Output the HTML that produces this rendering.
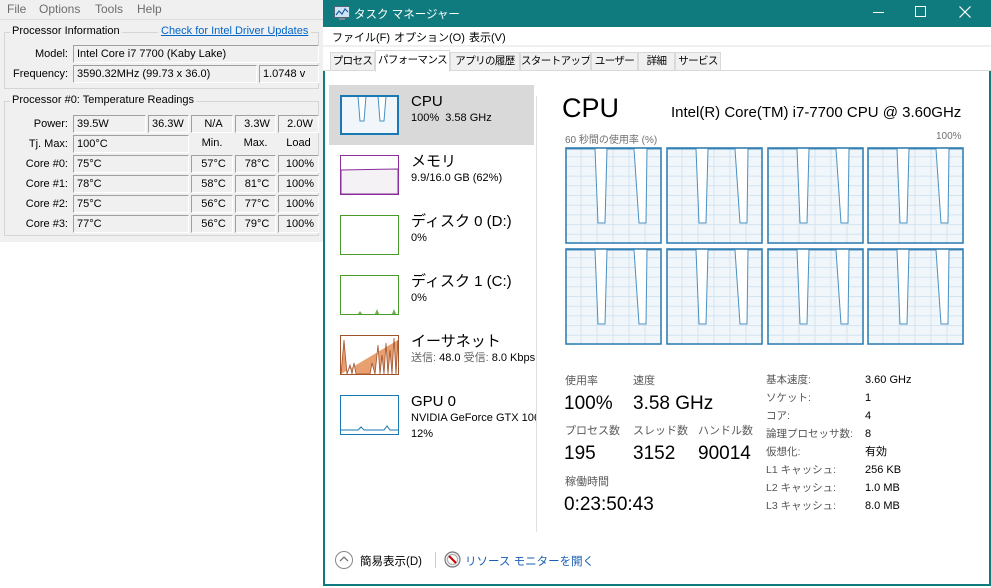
<!DOCTYPE html>
<html><head><meta charset="utf-8"><style>
*{margin:0;padding:0;box-sizing:border-box}
body{width:991px;height:588px;background:#fff;position:relative;overflow:hidden;font-family:"Liberation Sans","Noto Sans CJK JP",sans-serif;font-size:12px;color:#000}
.a{position:absolute;white-space:nowrap}
#left{left:0;top:0;width:323px;height:242px;background:#f0f0f0;font-size:11px}
.box{position:absolute;background:#f0f0f0;border:1px solid #a0a0a0;border-right-color:#fff;border-bottom-color:#fff;height:18px;line-height:16px;padding-left:3px}
.lbl{position:absolute;text-align:right;width:68px;line-height:18px}
.grp{position:absolute;border:1px solid #d5d5d5}
#tm{left:323px;top:0;width:668px;height:586px;border:2px solid #0f7b7f;border-top:none;background:#fff}
.tab{position:absolute;top:52px;height:19px;border:1px solid #d9d9d9;background:#f0f0f0;line-height:17px;padding:0;font-size:10.5px;letter-spacing:-0.6px;text-align:center;overflow:hidden}
.it1{position:absolute;font-size:15px;line-height:18px}
.it2{position:absolute;font-size:11px;line-height:14px}
.sl{position:absolute;font-size:11px;color:#595959;line-height:14px}
.sv{position:absolute;font-size:19px;line-height:22px}
.rl{position:absolute;font-size:10.5px;color:#555;line-height:14px}
.rv{position:absolute;font-size:11px;line-height:14px}
.mn{position:absolute;top:31px;font-size:11px;line-height:14px}
</style></head><body>
<div id="left" class="a">
 <div class="a" style="left:7px;top:2px;color:#6d6d6d;font-size:12px">File</div>
 <div class="a" style="left:39px;top:2px;color:#6d6d6d;font-size:12px">Options</div>
 <div class="a" style="left:95px;top:2px;color:#6d6d6d;font-size:12px">Tools</div>
 <div class="a" style="left:137px;top:2px;color:#6d6d6d;font-size:12px">Help</div>
 <div class="a" style="left:0;top:19px;width:323px;height:1px;background:#ddd"></div>
 <div class="grp" style="left:4px;top:32px;width:315px;height:57px"></div>
 <div class="a" style="left:10px;top:25px;background:#f0f0f0;padding:0 2px">Processor Information</div>
 <div class="a" style="left:158px;top:25px;background:#f0f0f0;padding:0 3px;color:#0066cc;text-decoration:underline">Check for Intel Driver Updates</div>
 <div class="lbl" style="left:0;top:45px">Model:</div>
 <div class="box" style="left:73px;top:45px;width:246px">Intel Core i7 7700 (Kaby Lake)</div>
 <div class="lbl" style="left:0;top:65px">Frequency:</div>
 <div class="box" style="left:73px;top:65px;width:184px">3590.32MHz (99.73 x 36.0)</div>
 <div class="box" style="left:259px;top:65px;width:60px">1.0748 v</div>
 <div class="grp" style="left:4px;top:101px;width:315px;height:135px"></div>
 <div class="a" style="left:10px;top:94px;background:#f0f0f0;padding:0 2px">Processor #0: Temperature Readings</div>
 <div class="lbl" style="left:0;top:115px">Power:</div>
 <div class="box" style="left:73px;top:115px;width:73px">39.5W</div>
 <div class="box" style="left:148px;top:115px;width:41px">36.3W</div>
 <div class="box" style="left:191px;top:115px;width:42px;text-align:center">N/A</div>
 <div class="box" style="left:235px;top:115px;width:41px;text-align:center">3.3W</div>
 <div class="box" style="left:278px;top:115px;width:41px;text-align:center">2.0W</div>
 <div class="lbl" style="left:0;top:135px">Tj. Max:</div>
 <div class="box" style="left:73px;top:135px;width:116px">100°C</div>
 <div class="a" style="left:191px;top:137px;width:42px;text-align:center">Min.</div>
 <div class="a" style="left:235px;top:137px;width:41px;text-align:center">Max.</div>
 <div class="a" style="left:278px;top:137px;width:41px;text-align:center">Load</div>
</div>

<div id="tm" class="a">
 <div class="a" style="left:-2px;top:0;width:668px;height:27px;background:#0f7b7f"></div>
 <svg class="a" style="left:9px;top:6px" width="16" height="14"><rect x="0.5" y="0.5" width="15" height="11" fill="#cfe3f5" stroke="#567"/><polyline points="2,9 5,5 8,8 11,3 14,6" fill="none" stroke="#1a5ea0" stroke-width="1.2"/><rect x="5" y="12" width="6" height="2" fill="#789"/></svg>
 <div class="a" style="left:29px;top:6px;color:#fff;font-size:11.5px">タスク マネージャー</div>
 <div class="a" style="left:548px;top:12px;width:11px;height:1px;background:#fff"></div>
 <div class="a" style="left:590px;top:6px;width:11px;height:11px;border:1px solid #fff"></div>
 <svg class="a" style="left:634px;top:6px" width="12" height="12"><path d="M0.5 0.5L11.5 11.5M11.5 0.5L0.5 11.5" stroke="#fff" stroke-width="1.2"/></svg>
 <div class="a" style="left:-2px;top:27px;width:668px;height:20px;background:#fff;border-bottom:2px solid #f0f0f0"></div>
 <div class="mn" style="left:7px">ファイル(F)</div>
 <div class="mn" style="left:69px">オプション(O)</div>
 <div class="mn" style="left:144px">表示(V)</div>
 <div class="a" style="left:-2px;top:47px;width:668px;height:24px;background:#fff;border-bottom:1px solid #d9d9d9"></div>
 <div class="tab" style="left:5px;width:45px">プロセス</div>
 <div class="tab" style="left:50px;top:50px;height:22px;width:75px;background:#fff;border-bottom-color:#fff;line-height:19px">パフォーマンス</div>
 <div class="tab" style="left:125px;width:70px">アプリの履歴</div>
 <div class="tab" style="left:195px;width:71px">スタートアップ</div>
 <div class="tab" style="left:266px;width:47px">ユーザー</div>
 <div class="tab" style="left:313px;width:37px">詳細</div>
 <div class="tab" style="left:350px;width:46px">サービス</div>

 <div class="a" style="left:4px;top:85px;width:205px;height:60px;background:#d9d9d9"></div>
 <div class="a" style="left:211px;top:96px;width:1px;height:436px;background:#e0e0e0"></div>

 <div class="a" style="left:237px;top:92px;font-size:27px;line-height:32px">CPU</div>
 <div class="a" style="left:346px;top:104px;font-size:15px;line-height:18px">Intel(R) Core(TM) i7-7700 CPU @ 3.60GHz</div>
 <div class="a" style="left:240px;top:131px;font-size:10px;color:#707070">60 秒間の使用率 (%)</div>
 <div class="a" style="left:611px;top:131px;font-size:10px;color:#707070">100%</div>

 <div class="sl" style="left:240px;top:374px">使用率</div>
 <div class="sl" style="left:308px;top:374px">速度</div>
 <div class="sv" style="left:239px;top:393px">100%</div>
 <div class="sv" style="left:308px;top:393px">3.58 GHz</div>
 <div class="sl" style="left:240px;top:424px">プロセス数</div>
 <div class="sl" style="left:308px;top:424px">スレッド数</div>
 <div class="sl" style="left:373px;top:424px">ハンドル数</div>
 <div class="sv" style="left:239px;top:443px">195</div>
 <div class="sv" style="left:308px;top:443px">3152</div>
 <div class="sv" style="left:373px;top:443px">90014</div>
 <div class="sl" style="left:240px;top:475px">稼働時間</div>
 <div class="sv" style="left:239px;top:494px">0:23:50:43</div>

 <div class="a" style="left:10px;top:551px;width:18px;height:18px;border:1px solid #888;border-radius:50%"></div>
 <svg class="a" style="left:14px;top:555px" width="10" height="8"><polyline points="1,6 5,2 9,6" fill="none" stroke="#777" stroke-width="1.3"/></svg>
 <div class="a" style="left:35px;top:553px;font-size:11.5px">簡易表示(D)</div>
 <div class="a" style="left:110px;top:552px;width:1px;height:16px;background:#ccc"></div>
 <svg class="a" style="left:119px;top:551px" width="17" height="17"><circle cx="8.5" cy="8.5" r="7.5" fill="#eee" stroke="#777" stroke-width="1.2"/><circle cx="8.5" cy="8.5" r="5" fill="#fff" stroke="#aaa"/><line x1="5" y1="5" x2="12" y2="12" stroke="#c00" stroke-width="2"/></svg>
 <div class="a" style="left:140px;top:553px;font-size:11.5px;color:#1a5fb4">リソース モニターを開く</div>
</div>
<script>
const T=(h,p)=>{const d=document.createElement('div');d.innerHTML=h;p.appendChild(d.firstChild)};
const L=document.getElementById('left');
[["#0","75","57","78"],["#1","78","58","81"],["#2","75","56","77"],["#3","77","56","79"]].forEach((c,i)=>{const y=155+i*20;
T(`<div class="lbl" style="left:0;top:${y}px">Core ${c[0]}:</div>`,L);
T(`<div class="box" style="left:73px;top:${y}px;width:116px">${c[1]}°C</div>`,L);
T(`<div class="box" style="left:191px;top:${y}px;width:42px;text-align:center">${c[2]}°C</div>`,L);
T(`<div class="box" style="left:235px;top:${y}px;width:41px;text-align:center">${c[3]}°C</div>`,L);
T(`<div class="box" style="left:278px;top:${y}px;width:41px;text-align:center">100%</div>`,L);});
const tm=document.getElementById('tm');
const items=[
["CPU","100%&nbsp; 3.58 GHz","","#1a78b4",'<polygon points="1,1 18,1 20,26 24,26 26,1 38,1 40,26 44,26 46,1 58,1 58,39 1,39" fill="#f1f6fb" stroke="#4a90c0"/>'],
["メモリ","9.9/16.0 GB (62%)","","#8b2d9b",'<polygon points="1,15 58,14 58,39 1,39" fill="#f4f2f4" stroke="#8b2d9b"/>'],
["ディスク 0 (D:)","0%","","#4c9a2a",""],
["ディスク 1 (C:)","0%","","#4c9a2a",'<polygon points="18,39 20,36 22,39 35,39 37,34 39,39 52,39 54,34 56,39" fill="#6ab04c"/>'],
["イーサネット","<span style=\"color:#666\">送信:</span> 48.0 <span style=\"color:#666\">受信:</span> 8.0 Kbps","","#a0522d",'<polyline points="1,39 4,5 7,39 10,30 12,39 14,28 16,39 30,39 32,28 35,39 38,10 40,39 42,20 44,39 46,8 48,39 50,15 52,39 54,3 56,39 58,5" fill="#e8a070" stroke="#a0522d" stroke-width="0.8"/>'],
["GPU 0","NVIDIA GeForce GTX 106","12%","#1a78b4",'<polyline points="1,35 18,35 21,32 24,35 44,35 47,31 50,35 58,35" fill="none" stroke="#1a78b4"/>']];
items.forEach((it,i)=>{const y=95+i*60;
T(`<svg class="a" style="left:15px;top:${y}px" width="59" height="40"><rect x="0.5" y="0.5" width="58" height="39" fill="#fff" stroke="${it[3]}"/>${it[4]}<rect x="${i==0?1:0.5}" y="${i==0?1:0.5}" width="${i==0?57:58}" height="${i==0?38:39}" fill="none" stroke="${it[3]}" stroke-width="${i==0?2:1}"/></svg>`,tm);
T(`<div class="it1 a" style="left:86px;top:${y-2}px">${it[0]}</div>`,tm);
T(`<div class="it2 a" style="left:86px;top:${y+16}px;width:125px;overflow:hidden">${it[1]}</div>`,tm);
if(it[2])T(`<div class="it2 a" style="left:86px;top:${y+32}px">${it[2]}</div>`,tm);});
const xs=[240,341,442,542],ys=[147,248];
ys.forEach(y=>xs.forEach(x=>{let g='';for(let i=1;i<10;i++)g+=`<line x1="0" y1="${i*9.7}" x2="97" y2="${i*9.7}" stroke="#d3e4f1"/>`;for(let i=1;i<6;i++)g+=`<line x1="${i*16}" y1="0" x2="${i*16}" y2="97" stroke="#d3e4f1"/>`;
T(`<svg class="a" style="left:${x}px;top:${y}px" width="97" height="97"><rect width="97" height="97" fill="#f1f6fb"/>${g}<polygon points="30,2 42,2 40,76 33,76" fill="#fff"/><polygon points="69,2 82,2 81,76 74,76" fill="#fff"/><polyline points="2,2 30,2 33,76 40,76 42,2 69,2 74,76 81,76 82,2 95,2" fill="none" stroke="#4a90c0"/><rect x="1" y="1" width="95" height="95" fill="none" stroke="#2a7ab0" stroke-width="1.5"/></svg>`,tm);}));
const R=[["基本速度:","3.60 GHz"],["ソケット:","1"],["コア:","4"],["論理プロセッサ数:","8"],["仮想化:","有効"],["L1 キャッシュ:","256 KB"],["L2 キャッシュ:","1.0 MB"],["L3 キャッシュ:","8.0 MB"]];
R.forEach((r,i)=>{const y=373+i*18;T(`<div class="rl a" style="left:441px;top:${y}px">${r[0]}</div>`,tm);T(`<div class="rv a" style="left:540px;top:${y}px">${r[1]}</div>`,tm);});
</script>
</body></html>
